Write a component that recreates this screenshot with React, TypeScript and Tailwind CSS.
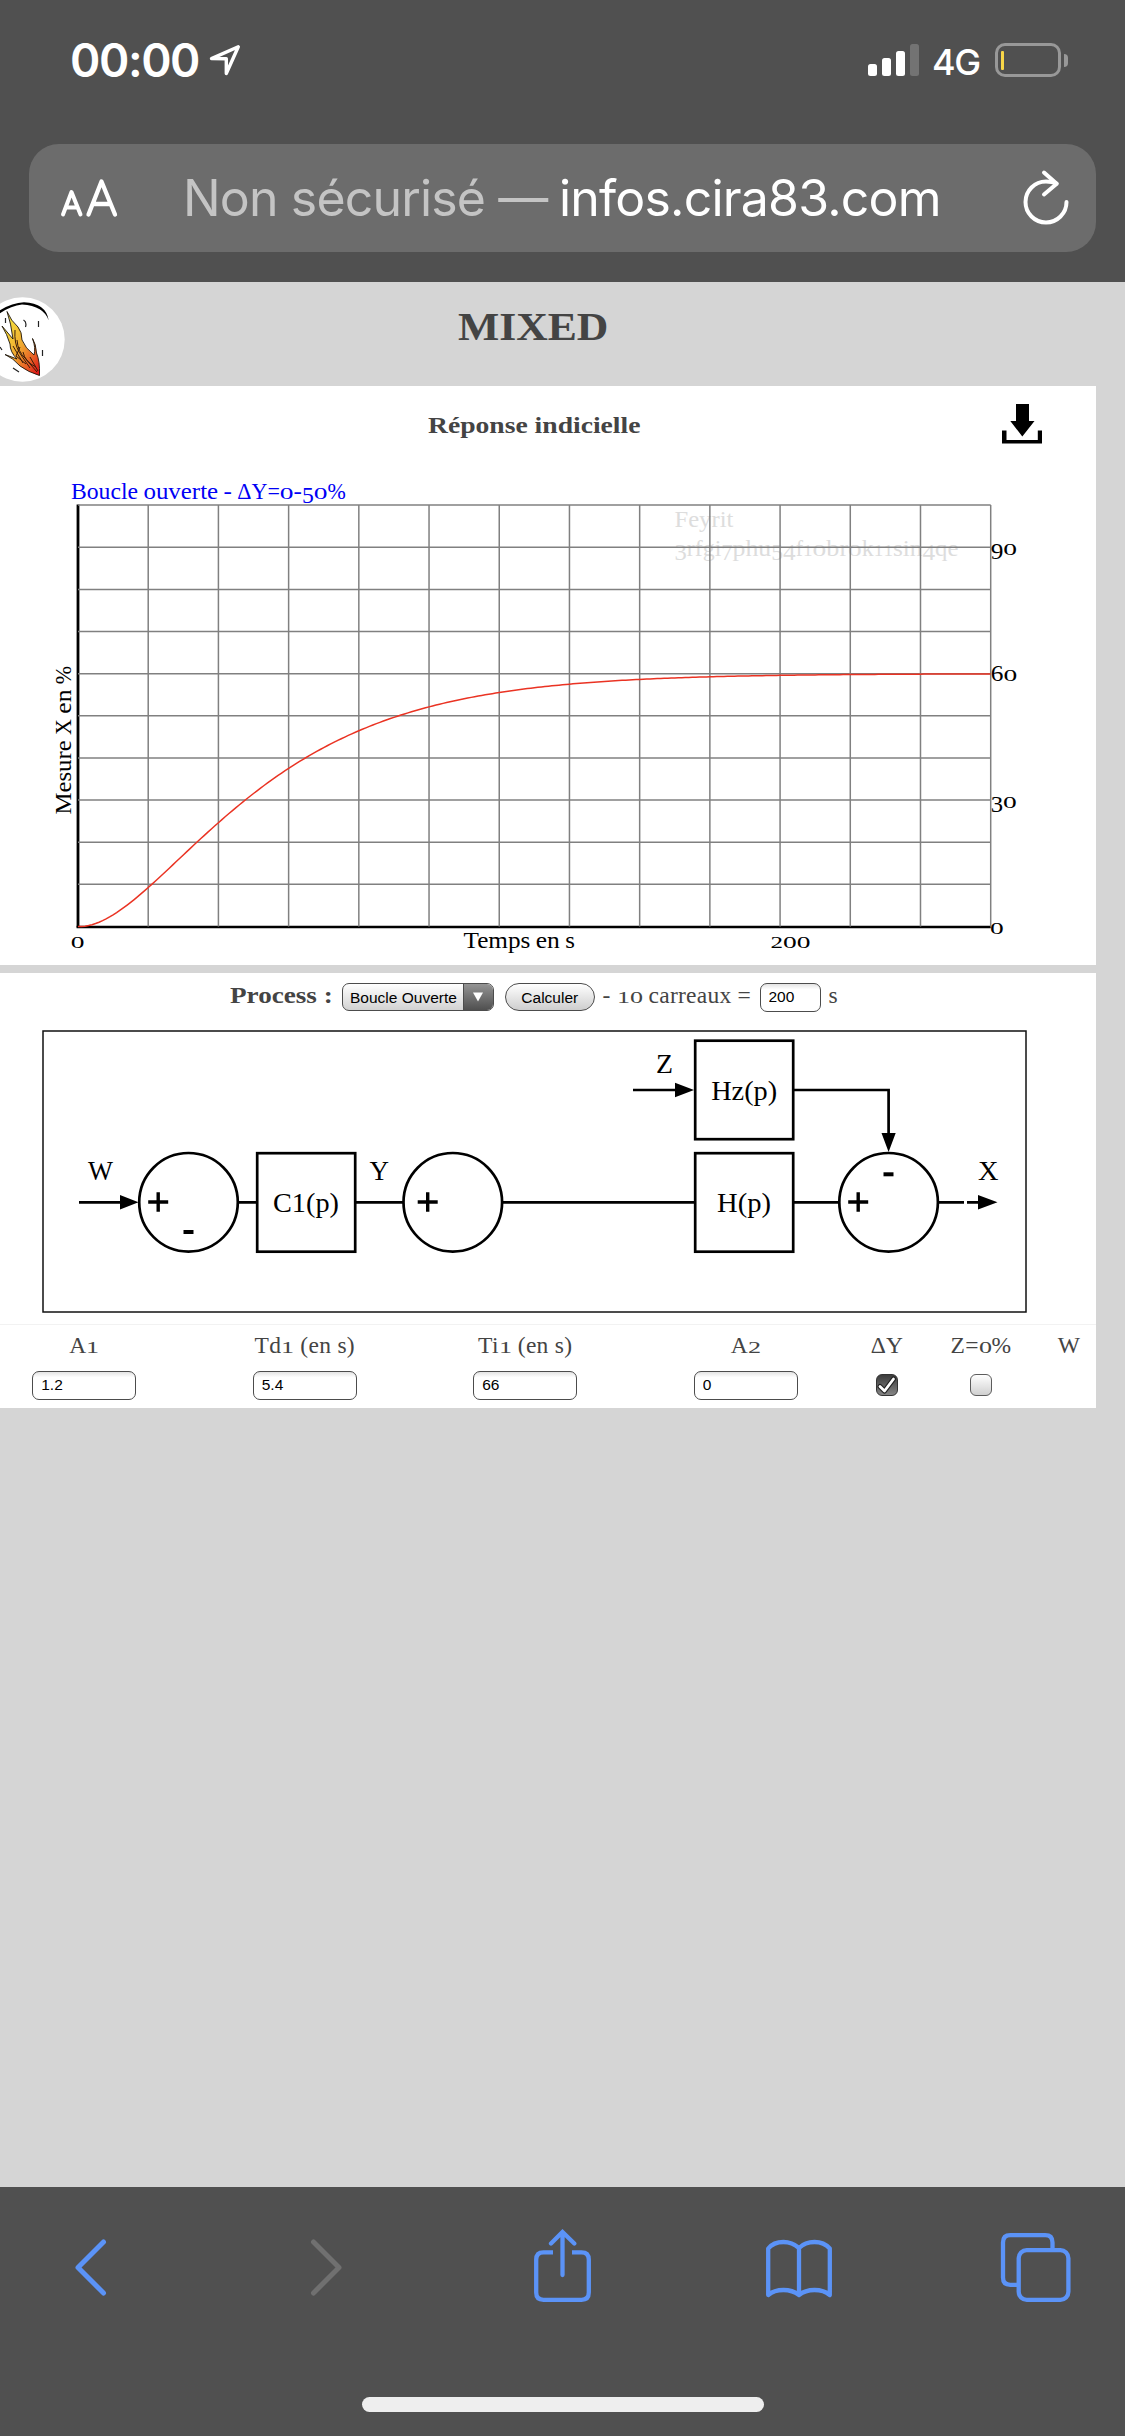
import type { ReactNode } from "react";

/* Advance widths, in thousandths of an em, of the serif used on the plot. */
const WIDTHS: Record<string, number> = {
  " ": 241, "%": 817, "-": 374, "=": 643, "Δ": 640,
  "0": 613, "1": 429, "2": 559, "3": 551, "4": 565, "5": 528, "6": 566, "7": 503, "8": 596, "9": 565,
  B: 654, F: 600, M: 927, T: 618, X: 710, Y: 615,
  b: 560, c: 454, e: 484, f: 325, g: 509, h: 582, i: 293, k: 534, l: 287, m: 880, n: 591, o: 539,
  p: 571, q: 559, r: 410, s: 432, t: 346, u: 575, v: 497, y: 493,
};

const splitRuns = (text: string) => text.match(/[012]|[34579]|[^0-57 9]+| +/g) ?? [];

/* Text of the plot, with old-style figures: 0-2 at x-height, 3-5, 7, 9 below the line. */
function PlotText({ x, y, fill = "#000", children }: { x: number; y: number; fill?: string; children: string }) {
  const size = 22.4;
  let pen = x;
  return (
    <g fill={fill} fontFamily="Liberation Serif, serif">
      {splitRuns(children).map((run, i) => {
        const width = [...run].reduce((sum, c) => sum + (WIDTHS[c] ?? 500), 0) * size / 1000;
        const start = pen;
        pen += width;
        if (run.trim() === "") return null;
        if (/^[0-57-9]$/.test(run)) {
          const small = /^[012]$/.test(run);
          const fontSize = small ? 17.2 : 23.5;
          return (
            <text
              key={i}
              transform={`translate(${start} ${small ? y : y + 4.2}) scale(${width / (fontSize * 0.5)} 1)`}
              fontSize={fontSize}
            >
              {run}
            </text>
          );
        }
        return (
          <text key={i} x={start} y={y} fontSize="23.5" textLength={width} lengthAdjust="spacingAndGlyphs">
            {run}
          </text>
        );
      })}
    </g>
  );
}

/* The same figures for running HTML text. */
function OldStyle({ children }: { children: string }) {
  return (
    <>
      {children.split(/([012])/).map((part, i) =>
        /^[012]$/.test(part) ? (
          <span key={i} className="inline-block w-[0.74em] scale-x-[1.5] text-center text-[0.74em] tracking-normal">
            {part}
          </span>
        ) : (
          part
        ),
      )}
    </>
  );
}

function StatusBar() {
  return (
    <div className="flex h-[120px] items-center pl-[70px] pr-[57px] text-white">
      <span className="w-[139px] font-['Inter'] text-[46px] font-semibold leading-none tracking-[-1.4px]">00:00</span>
      <svg width="32" height="32" viewBox="0 0 32 32" fill="none" stroke="#fff" strokeWidth="3.4" strokeLinejoin="round" strokeLinecap="round">
        <path d="M29.3 2.8 2.5 14.6 17.3 14.8 17.3 29.5Z" />
      </svg>
      <div className="ml-auto flex h-[34px] items-end gap-[5px] pb-px">
        <i className="h-3 w-[9px] rounded-[2.5px] bg-white" />
        <i className="h-[18px] w-[9px] rounded-[2.5px] bg-white" />
        <i className="h-[25px] w-[9px] rounded-[2.5px] bg-white" />
        <i className="h-8 w-[9px] rounded-[2.5px] bg-[#737373]" />
      </div>
      <span className="ml-[13px] mt-1 w-[63px] font-['Inter'] text-[36px] font-medium leading-none tracking-[-1.5px]">4G</span>
      <div className="flex h-[34px] w-[66px] items-center rounded-[10px] border-[3px] border-[#989898] pl-[3px]">
        <i className="h-[19px] w-[3px] rounded-[1px] bg-[#f8d648]" />
      </div>
      <i className="ml-[3px] h-[13px] w-[4px] rounded-r-full bg-[#989898]" />
    </div>
  );
}

function AddressBar() {
  return (
    <div className="mx-[29px] mt-6 flex h-[108px] items-center rounded-[30px] bg-[#6c6c6c] pl-[31px] pr-[25px]">
      <svg width="58" height="40" viewBox="0 0 58 40" fill="none" stroke="#fff" strokeLinecap="round" strokeLinejoin="round">
        <path strokeWidth="4" d="M3 36.5 11.5 14 20.500 36.5M6 29.500H17" />
        <path strokeWidth="4.300" d="M28.500 36.5 41.500 3.500 55 36.5M33 26H50" />
      </svg>
      <div className="ml-[65px] flex items-baseline whitespace-pre font-['Inter'] text-[50px] leading-none">
        <span className="w-[376px] tracking-[-0.850px] text-[#c4c4c4]">Non sécurisé —</span>
        <span className="tracking-[-0.8px] text-white">infos.cira83.com</span>
      </div>
      <svg className="ml-auto" width="50" height="60" viewBox="0 0 50 60" fill="none" stroke="#fff" strokeWidth="4" strokeLinecap="round" strokeLinejoin="round">
        <path d="M45.5 34A20.5 20.5 0 1 1 25 13.5Q31 13.5 35.5 15.5" />
        <path d="M23 4.5 35.7 15.8 23 26.5" />
      </svg>
    </div>
  );
}

function FlameLogo() {
  return (
    <svg className="-ml-[20px] mt-[15px]" width="86" height="86" viewBox="-20 297 86 86">
      <defs>
        <linearGradient id="flame" x1="0.1" y1="0.1" x2="0.9" y2="1">
          <stop offset="0" stopColor="#f6e73c" />
          <stop offset="0.5" stopColor="#f0a830" />
          <stop offset="0.8" stopColor="#e85a24" />
          <stop offset="1" stopColor="#e01818" />
        </linearGradient>
      </defs>
      <circle cx="22.5" cy="339.5" r="42.2" fill="#fff" />
      <path d="M-10 317Q8 303 24 302.3 46 303 48.7 320.500Q44 306 22 304.500 8 306-8 319Z" fill="#000" />
      <path
        d="M7 311.500Q11 321 18 327 22 332 22 340 25 348 34 355 36 348 32.500 338.500 36 344 36.500 353 40 361 39.500 375.500 28 372 20 366 13 358 5 354.500L17 359Q10 352 10 344 7 334 2 326L13 339Q11 323 7 311.500Z"
        fill="url(#flame)" stroke="#1c1308" strokeWidth="0.9"
      />
      <path
        d="M15 330Q14 343 19 352L30 368M17 340Q18 352 25 358L37 372M20 347 16 356 26 364M23 352Q25 362 36 367M30 357 38 371M13 346 23 363"
        fill="none" stroke="#3a1c0a" strokeWidth="1"
      />
      <path d="M23.500 320Q27 322 25.500 327M38.500 321V327M5.500 318V323M42.500 350V356M13 368 19 372M0 347 2 350" fill="none" stroke="#222" strokeWidth="1.200" />
    </svg>
  );
}

function Plot() {
  const left = 78, right = 990.7, top = 505.1, bottom = 926.5;
  const dx = (right - left) / 13, dy = (bottom - top) / 10;
  const curve = Array.from({ length: 261 }, (_, t) => {
    const u = Math.max(0, 0.0356 * t - 0.017);
    const value = 60 * (1 - (1 + u) * Math.exp(-u));
    return `${(left + (t / 20) * dx).toFixed(2)},${(bottom - (value / 10) * dy).toFixed(2)}`;
  }).join(" ");
  return (
    <svg className="block" width="1096" height="508" viewBox="0 456 1096 508">
      <PlotText x={71} y={498.600} fill="#0000f5">Boucle ouverte - ΔY=0-50%</PlotText>
      <PlotText x={674.500} y={527} fill="#dddddd">Feyrit</PlotText>
      <PlotText x={674.500} y={555.700} fill="#dddddd">3rfgi7phu54f10br0k11sin4qe</PlotText>
      <path d={`M${left} ${top - 0.5}V${bottom + 1}`} stroke="#000" strokeWidth="2.800" />
      <path d={`M${left - 1.400} ${bottom + 0.500}H${right}`} stroke="#000" strokeWidth="2.600" />
      <g stroke="#808080" strokeWidth="1.500">
        {Array.from({ length: 13 }, (_, i) => (
          <line key={i} x1={left + (i + 1) * dx} x2={left + (i + 1) * dx} y1={top} y2={bottom} />
        ))}
        {Array.from({ length: 10 }, (_, i) => (
          <line key={i} x1={left} x2={right} y1={top + i * dy} y2={top + i * dy} />
        ))}
      </g>
      <polyline points={curve} fill="none" stroke="#ea3323" strokeWidth="1.500" />
      <PlotText x={990.700} y={555.200}>90</PlotText>
      <PlotText x={990.700} y={681}>60</PlotText>
      <PlotText x={990.700} y={808}>30</PlotText>
      <PlotText x={990} y={934}>0</PlotText>
      <PlotText x={70.800} y={948}>0</PlotText>
      <PlotText x={463.500} y={948}>Temps en s</PlotText>
      <PlotText x={770.500} y={948}>200</PlotText>
      <g transform="translate(70.700 814.500) rotate(-90)">
        <PlotText x={0} y={0}>Mesure X en %</PlotText>
      </g>
    </svg>
  );
}

function Sign({ x, y, plus }: { x: number; y: number; plus?: boolean }) {
  return plus ? (
    <path d={`M${x - 10} ${y}H${x + 10}M${x} ${y - 9.800}V${y + 9.800}`} strokeWidth="3.400" />
  ) : (
    <path d={`M${x - 5} ${y}H${x + 5}`} strokeWidth="4" />
  );
}

function DiagramText({ x, y, w, children }: { x: number; y: number; w: number; children: string }) {
  return (
    <text x={x} y={y} textLength={w} lengthAdjust="spacingAndGlyphs" fontSize="27.500" fill="#000" stroke="none" fontFamily="Liberation Serif, serif">
      {children}
    </text>
  );
}

function BlockDiagram() {
  return (
    <svg className="ml-[42px] block" width="986" height="283" viewBox="42 1030 986 283" fill="none" stroke="#000" strokeWidth="2.700">
      <rect x="43" y="1031" width="983" height="281" stroke="#111" strokeWidth="1.500" />
      <circle cx="188.500" cy="1202.300" r="49.300" />
      <circle cx="452.800" cy="1202.300" r="49.300" />
      <circle cx="888.600" cy="1202.300" r="49.300" />
      <rect x="257.200" y="1153.200" width="98" height="98.500" />
      <rect x="695.200" y="1153.200" width="98" height="98.500" />
      <rect x="695.200" y="1040.700" width="98" height="98.500" />
      <path d="M79 1202.300H122M237.800 1202.300H257M355 1202.300H403.500M502 1202.300H695M793 1202.300H839.500M938 1202.300H964M967 1202.300H980M633 1090H677M793 1090H888.600V1135" />
      <path
        d="M120 1195V1209.500L138.500 1202.300ZM978 1195V1209.500L997.500 1202.300ZM675 1082.700V1097.200L694 1090ZM881.500 1133H895.700L888.600 1152Z"
        fill="#000" stroke="none"
      />
      <Sign x={158.200} y={1202} plus />
      <Sign x={427.700} y={1202} plus />
      <Sign x={858.200} y={1202} plus />
      <Sign x={188.500} y={1232} />
      <Sign x={888.500} y={1174.300} />
      <DiagramText x={88} y={1180} w={25}>W</DiagramText>
      <DiagramText x={369.500} y={1180} w={19.500}>Y</DiagramText>
      <DiagramText x={273} y={1212.300} w={66}>C1(p)</DiagramText>
      <DiagramText x={656} y={1073} w={17}>Z</DiagramText>
      <DiagramText x={711.200} y={1100} w={66}>Hz(p)</DiagramText>
      <DiagramText x={717} y={1212.300} w={54}>H(p)</DiagramText>
      <DiagramText x={978} y={1180} w={20.500}>X</DiagramText>
    </svg>
  );
}

function Field({ value, className }: { value: string; className: string }) {
  return (
    <input
      readOnly
      value={value}
      className={`block h-[29.500px] rounded-[7px] border-[1.500px] border-[#4c4c4c] bg-white bg-linear-to-b from-[#e4e4e4] via-white via-20% to-white pl-2 font-['Liberation_Sans'] text-[15.500px] text-black ${className}`}
    />
  );
}

function ProcessRow() {
  return (
    <div className="flex h-[57px] items-start pl-[229.500px] pt-[9.700px] font-['Liberation_Serif'] text-[23.500px] leading-[30px] text-[#444]">
      <b className="mt-[-3px] w-[112px] whitespace-nowrap"><span className="inline-block origin-left scale-x-[1.155]">Process :</span></b>
      <button className="flex h-[28px] w-[152px] overflow-hidden rounded-[7px] border-[1.500px] border-[#4c4c4c] bg-linear-to-b from-white to-[#d2d2d2] font-['Liberation_Sans'] text-[15.500px] leading-[28px] text-black">
        <span className="w-[120.500px] whitespace-nowrap pl-[7.500px] text-left">Boucle Ouverte</span>
        <span className="flex flex-1 items-center justify-center self-stretch border-l border-[#4c4c4c] bg-linear-to-b from-[#949494] to-[#505050]">
          <svg width="10" height="10" viewBox="0 0 10 10"><path d="M0 0.500H10L5 9.500Z" fill="#fff" /></svg>
        </span>
      </button>
      <button className="ml-[11px] h-[28px] w-[90.500px] rounded-full border-[1.500px] border-[#4c4c4c] bg-linear-to-b from-white to-[#cecece] pt-px font-['Liberation_Sans'] text-[15.500px] leading-[25px] text-black">
        Calculer
      </button>
      <span className="ml-[7.500px] mt-[-3px] w-[157px] whitespace-nowrap tracking-[0.250px]">
        <OldStyle>- 10 carreaux =</OldStyle>
      </span>
      <Field value="200" className="w-[61px]" />
      <span className="ml-[8px] mt-[-3px]">s</span>
    </div>
  );
}

function Column({ label, children }: { label: string; children?: ReactNode }) {
  return (
    <div className="flex flex-col items-center">
      <span className="h-[41px] whitespace-nowrap leading-[30px] tracking-[0.300px]"><OldStyle>{label}</OldStyle></span>
      {children}
    </div>
  );
}

function Parameters() {
  return (
    <div className="-ml-[26px] grid h-[84px] grid-cols-[220.500px_220.500px_220.500px_220.500px_62px_126px_50px] border-t border-[#f2f2f2] pt-[4.500px] font-['Liberation_Serif'] text-[23.500px] text-[#444]">
      <Column label="A1"><Field value="1.2" className="w-[104px]" /></Column>
      <Column label="Td1 (en s)"><Field value="5.4" className="w-[104px]" /></Column>
      <Column label="Ti1 (en s)"><Field value="66" className="w-[104px]" /></Column>
      <Column label="A2"><Field value="0" className="w-[104px]" /></Column>
      <Column label="ΔY">
        <span className="mt-[3px] flex size-[22.500px] rounded-[6px] border-[1.500px] border-[#333] bg-linear-to-b from-[#3c3c3c] to-[#858585]">
          <svg width="20" height="20" viewBox="0 0 20 20" fill="none" strokeLinecap="round" strokeLinejoin="round">
            <path d="M3 11.500 7.500 16 16.500 4" stroke="#222" strokeWidth="5" />
            <path d="M3 11.500 7.500 16 16.500 4" stroke="#fff" strokeWidth="2.800" />
          </svg>
        </span>
      </Column>
      <Column label="Z=0%">
        <span className="mt-[3px] size-[22.500px] rounded-[6px] border-[1.500px] border-[#5c5c5c] bg-linear-to-b from-white to-[#d0d0d0]" />
      </Column>
      <Column label="W" />
    </div>
  );
}

function Toolbar() {
  return (
    <footer className="h-[249px] bg-[#505050]">
      <div className="flex h-[210px] items-start pl-[74px] pt-[42px] text-[#5b93f7]">
        <svg width="34" height="74" viewBox="74 2229 34 74" fill="none" stroke="currentColor" strokeWidth="5" strokeLinecap="round" strokeLinejoin="round">
          <path d="M103.500 2242 78 2267.500 103.500 2293" />
        </svg>
        <svg className="ml-[202px]" width="34" height="74" viewBox="310 2229 34 74" fill="none" stroke="#707070" strokeWidth="5" strokeLinecap="round" strokeLinejoin="round">
          <path d="M313.500 2242 339 2267.500 313.500 2293" />
        </svg>
        <svg className="ml-[189px]" width="60" height="74" viewBox="533 2229 60 74" fill="none" stroke="currentColor" strokeWidth="4.300">
          <path d="M553 2252.300H543.500Q536.200 2252.300 536.200 2259.600V2292.500Q536.200 2299.800 543.500 2299.800H581.500Q588.800 2299.800 588.800 2292.500V2259.600Q588.800 2252.300 581.500 2252.300H572" />
          <path d="M562.500 2232.500V2275M551 2243.500 562.500 2232 574.300 2243.500" strokeLinecap="round" />
        </svg>
        <svg className="ml-[172px]" width="68" height="74" viewBox="765 2229 68 74" fill="none" stroke="currentColor" strokeWidth="4.300" strokeLinecap="round" strokeLinejoin="round">
          <path d="M799 2248Q792 2242 783.500 2242 773.500 2242 768.200 2248.500V2295Q774 2290 783.500 2290 792.500 2290 799 2295 805 2290 814.500 2290 824 2290 829.800 2295V2248.500Q824 2242 814.500 2242 805 2242 799 2248V2295" />
        </svg>
        <svg className="ml-[166.500px]" width="72" height="74" viewBox="999.500 2229 72 74" fill="none" stroke="currentColor" strokeWidth="4.300">
          <path d="M1052 2249V2242.500Q1052 2235.200 1044.700 2235.200H1009.800Q1002.500 2235.200 1002.500 2242.500V2277.500Q1002.500 2284.800 1009.800 2284.800H1017" />
          <rect x="1018.200" y="2250.200" width="49.700" height="49.600" rx="8" />
        </svg>
      </div>
      <div className="mx-auto h-[15px] w-[402px] rounded-full bg-[#eeeeee]" />
    </footer>
  );
}

export default function App() {
  return (
    <div className="flex h-[2436px] w-[1125px] flex-col overflow-hidden bg-[#d5d5d5]">
      <header className="h-[282px] bg-[#505050]">
        <StatusBar />
        <AddressBar />
      </header>
      <main className="h-[1905px] overflow-hidden">
        <div className="flex h-[104px] items-start">
          <FlameLogo />
          <h1 className="ml-[392px] mt-[20px] origin-left scale-x-[1.065] font-['Liberation_Serif'] text-[41px] font-bold leading-[48px] text-[#444]">MIXED</h1>
        </div>
        <section className="h-[578.500px] w-[1096px] bg-white">
          <div className="flex h-[70px] items-start">
            <h2 className="ml-[428px] mt-[24px] w-[574px] whitespace-nowrap font-['Liberation_Serif'] text-[23.500px] font-bold leading-[30px] text-[#444]">
              <span className="inline-block origin-left scale-x-[1.175]">Réponse indicielle</span>
            </h2>
            <svg className="mt-[17px]" width="40" height="41" viewBox="0 0 40 41">
              <path d="M14 1H27V18H32.500L20.300 33.500 8.300 18H14ZM0 27.500H4.500V37H35.800V27.500H40V40.500H0Z" />
            </svg>
          </div>
          <Plot />
        </section>
        <section className="mt-[8.500px] h-[435px] w-[1096px] overflow-hidden bg-white">
          <ProcessRow />
          <BlockDiagram />
          <div className="h-[11px]" />
          <Parameters />
        </section>
      </main>
      <Toolbar />
    </div>
  );
}
